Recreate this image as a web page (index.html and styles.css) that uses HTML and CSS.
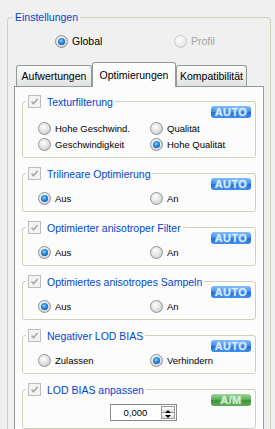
FILE: index.html
```html
<!DOCTYPE html>
<html lang="de">
<head>
    <meta charset="UTF-8">
    <meta name="viewport" content="width=device-width, initial-scale=1.0">
    <title>Einstellungen</title>
    <link rel="stylesheet" href="styles.css">
</head>
<body>
    <div class="settings">
        <div class="settings-title">Einstellungen</div>

        <div class="scope">
            <label class="opt scope-global"><span class="radio on"></span>Global</label>
            <label class="opt disabled"><span class="radio"></span>Profil</label>
        </div>

        <div class="tabs">
            <div class="tab tab-a">Aufwertungen</div>
            <div class="tab tab-b active">Optimierungen</div>
            <div class="tab tab-c">Kompatibilität</div>
        </div>

        <div class="panel">
            <div class="group two">
                <div class="group-head">
                    <div class="legend">
                        <span class="check"><svg width="11" height="11" viewBox="0 0 11 11"><path d="M2.5 5.5 L4.5 7.8 L8.6 3" /></svg></span>
                        Texturfilterung
                    </div>
                    <span class="badge auto">AUTO</span>
                </div>
                <div class="opts">
                    <label class="opt"><span class="radio"></span>Hohe Geschwind.</label>
                    <label class="opt"><span class="radio"></span>Qualität</label>
                    <label class="opt"><span class="radio"></span>Geschwindigkeit</label>
                    <label class="opt"><span class="radio on"></span>Hohe Qualität</label>
                </div>
            </div>

            <div class="group">
                <div class="group-head">
                    <div class="legend">
                        <span class="check"><svg width="11" height="11" viewBox="0 0 11 11"><path d="M2.5 5.5 L4.5 7.8 L8.6 3" /></svg></span>
                        Trilineare Optimierung
                    </div>
                    <span class="badge auto">AUTO</span>
                </div>
                <div class="opts">
                    <label class="opt"><span class="radio on"></span>Aus</label>
                    <label class="opt"><span class="radio"></span>An</label>
                </div>
            </div>

            <div class="group">
                <div class="group-head">
                    <div class="legend">
                        <span class="check"><svg width="11" height="11" viewBox="0 0 11 11"><path d="M2.5 5.5 L4.5 7.8 L8.6 3" /></svg></span>
                        Optimierter anisotroper Filter
                    </div>
                    <span class="badge auto">AUTO</span>
                </div>
                <div class="opts">
                    <label class="opt"><span class="radio on"></span>Aus</label>
                    <label class="opt"><span class="radio"></span>An</label>
                </div>
            </div>

            <div class="group">
                <div class="group-head">
                    <div class="legend">
                        <span class="check"><svg width="11" height="11" viewBox="0 0 11 11"><path d="M2.5 5.5 L4.5 7.8 L8.6 3" /></svg></span>
                        Optimiertes anisotropes Sampeln
                    </div>
                    <span class="badge auto">AUTO</span>
                </div>
                <div class="opts">
                    <label class="opt"><span class="radio on"></span>Aus</label>
                    <label class="opt"><span class="radio"></span>An</label>
                </div>
            </div>

            <div class="group">
                <div class="group-head">
                    <div class="legend">
                        <span class="check"><svg width="11" height="11" viewBox="0 0 11 11"><path d="M2.5 5.5 L4.5 7.8 L8.6 3" /></svg></span>
                        Negativer LOD BIAS
                    </div>
                    <span class="badge auto">AUTO</span>
                </div>
                <div class="opts">
                    <label class="opt"><span class="radio"></span>Zulassen</label>
                    <label class="opt"><span class="radio on"></span>Verhindern</label>
                </div>
            </div>

            <div class="group spin-group">
                <div class="group-head">
                    <div class="legend">
                        <span class="check"><svg width="11" height="11" viewBox="0 0 11 11"><path d="M2.5 5.5 L4.5 7.8 L8.6 3" /></svg></span>
                        LOD BIAS anpassen
                    </div>
                    <span class="badge am">A/M</span>
                </div>
                <div class="spin">
                    <span class="spin-value">0,000</span>
                    <span class="spin-btns">
                        <span class="spin-btn up"></span>
                        <span class="spin-btn down"></span>
                    </span>
                </div>
            </div>
        </div>
    </div>
</body>
</html>
```

FILE: styles.css
```css
body {
    margin: 0;
    height: 429px;
    overflow: hidden;
    background: #f0f0f0;
    color: #000;
    font-family: 'Liberation Sans', Arial, sans-serif;
    font-size: 9.5px;
}

/* outer group box */
.settings {
    margin: 17px 4px 0 7px;
    padding: 0 6px;
    border: 1px solid #d0d0bf;
    border-bottom: none;
    border-radius: 4px 4px 0 0;
}

.settings-title {
    width: fit-content;
    margin: -7px 0 0 -1px;
    padding: 0 2px;
    background: #f0f0f0;
    color: #0046d5;
    font-size: 10.5px;
    line-height: 12px;
}

.scope {
    display: flex;
    margin-top: 10px;
    padding-left: 41px;
    font-size: 10.5px;
}

.scope-global {
    width: 119px;
}

/* radio buttons */
.opt {
    display: flex;
    align-items: center;
    gap: 4px;
    height: 16px;
    white-space: nowrap;
}

.radio {
    position: relative;
    flex: none;
    width: 13px;
    height: 13px;
    box-sizing: border-box;
    border: 1px solid #8f9294;
    border-radius: 50%;
    background: radial-gradient(circle at 40% 35%, #ffffff 0, #e8e8e8 40%, #c3c3c3 100%);
}

.radio.on::after {
    content: "";
    position: absolute;
    inset: 2px;
    border-radius: 50%;
    background: radial-gradient(circle at 45% 40%, #8fd8ff 0, #1f84dc 45%, #0a3f84 100%);
}

.disabled {
    color: #a5a5a5;
}

.disabled .radio {
    border-color: #cacaca;
    background: radial-gradient(circle at 40% 35%, #ffffff 0, #efefef 50%, #dadada 100%);
}

/* tabs */
.tabs {
    display: flex;
    align-items: flex-end;
    height: 24px;
    margin: 13px 0 0 2px;
}

.tab {
    display: flex;
    align-items: center;
    justify-content: center;
    height: 21px;
    box-sizing: border-box;
    border: 1px solid #919b9c;
    border-bottom: none;
    border-radius: 3px 3px 0 0;
    background: linear-gradient(#fdfdfd, #e2e2e2);
    font-size: 10.5px;
}

.tab.active {
    position: relative;
    z-index: 1;
    height: 25px;
    margin-bottom: -1px;
    background: #fcfcfc;
}

.tab-a { width: 76px; }
.tab-b { width: 84px; }
.tab-c { width: 71px; }

.panel {
    padding: 14px 7px 10px;
    border: 1px solid #919b9c;
    background: #fcfcfc;
}

/* inner group boxes */
.group {
    padding: 0 4px 5px 3px;
    border: 1px solid #d0d0bf;
    border-radius: 3px;
}

.group + .group {
    margin-top: 15px;
}

.group-head {
    display: flex;
    justify-content: space-between;
    align-items: flex-start;
    height: 23px;
    margin-top: -7px;
}

.legend {
    display: flex;
    align-items: center;
    gap: 6px;
    height: 13px;
    padding: 0 2px;
    background: #fcfcfc;
    color: #0046d5;
    font-size: 10.5px;
    white-space: nowrap;
}

.check {
    display: flex;
    width: 13px;
    height: 13px;
    box-sizing: border-box;
    border: 1px solid #bdbdbd;
    background: #f3f3f3;
}

.check path {
    fill: none;
    stroke: #aaaaaa;
    stroke-width: 1.7;
}

.badge {
    width: 40px;
    height: 12px;
    margin-top: 11px;
    border-radius: 3px;
    font-size: 11px;
    font-weight: bold;
    line-height: 12px;
    text-align: center;
    letter-spacing: 0.4px;
}

.auto {
    background: linear-gradient(#84bef8, #4190ee 45%, #1f6bdc 55%, #3e8ef0);
    color: #d8ebff;
    text-shadow: 0 0 2px #a8d4ff;
}

.am {
    background: linear-gradient(#a2d59f, #5cb058 45%, #3e933b 55%, #5aab56);
    color: #d6eed4;
    text-shadow: 0 0 2px #b8e6b5;
}

.opts {
    display: grid;
    grid-template-columns: 112px 1fr;
    padding-left: 12px;
}

.two .opts {
    padding-top: 2px;
}

/* spin box */
.spin-group {
    padding-bottom: 7px;
}

.spin {
    display: flex;
    width: 67px;
    height: 17px;
    margin: -2px 0 0 84px;
    box-sizing: border-box;
    border: 1px solid #8a8a8a;
    background: #fff;
}

.spin-value {
    flex: 1;
    line-height: 15px;
    text-align: center;
}

.spin-btns {
    display: flex;
    flex-direction: column;
    width: 14px;
    padding: 1px;
}

.spin-btn {
    position: relative;
    flex: 1;
    border: 1px solid #9a9a9a;
    background: linear-gradient(#ffffff, #dcdcdc);
}

.spin-btn + .spin-btn {
    border-top: none;
}

.spin-btn::after {
    content: "";
    position: absolute;
    left: 50%;
    top: 50%;
    margin: -2px 0 0 -3px;
    border: 3px solid transparent;
}

.up::after {
    margin-top: -3px;
    border-bottom-color: #000;
}

.down::after {
    margin-top: -1px;
    border-top-color: #000;
}
```
